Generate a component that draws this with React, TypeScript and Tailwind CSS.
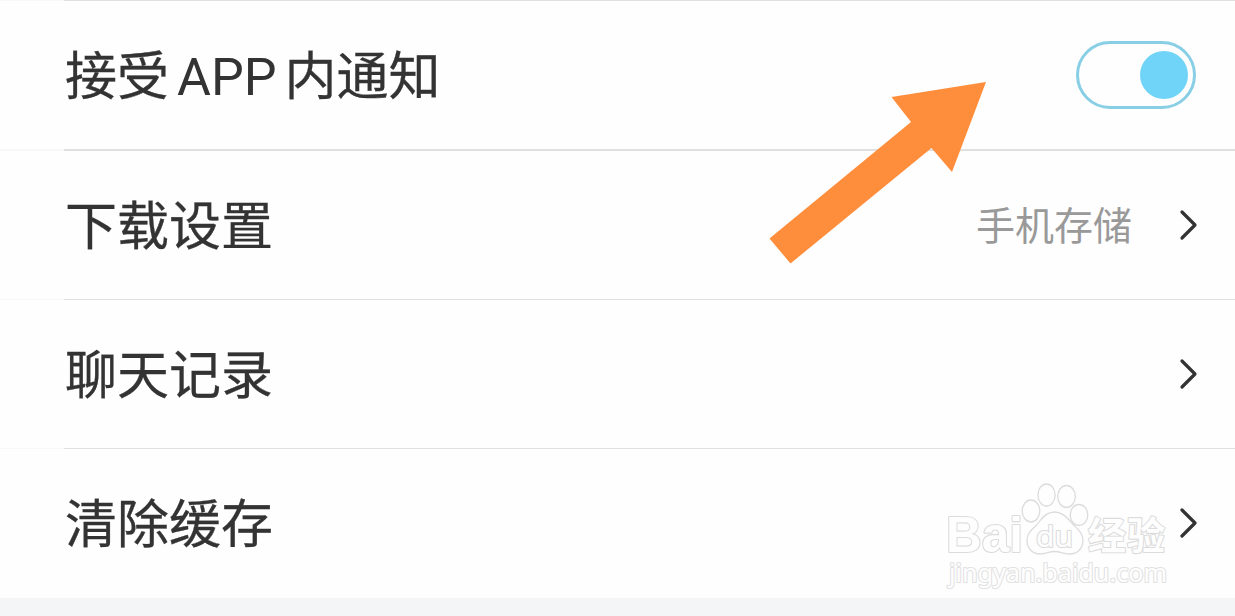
const rows = [
  { label: "下载设置", value: "手机存储", divider: true },
  { label: "聊天记录", value: "", divider: true },
  { label: "清除缓存", value: "", divider: false },
];

function Divider({ className }: { className: string }) {
  return (
    <div className={`flex shrink-0 ${className}`}>
      <div className="w-16 bg-[#f8f8f8]" />
      <div className="flex-1 bg-[#e0e0e0]" />
    </div>
  );
}

function Chevron() {
  return (
    <svg width="20" height="34" viewBox="0 0 20 34" fill="none" stroke="#333" strokeWidth="3.2" strokeLinecap="round" strokeLinejoin="round">
      <path d="M3 4 L16 17 L3 30" />
    </svg>
  );
}

function Toggle() {
  return (
    <div className="flex h-[68px] w-[120px] items-center justify-end rounded-full border-3 border-[#88cfe5] pr-[5px]">
      <div className="size-12 rounded-full bg-[#70d3f8]" />
    </div>
  );
}

function Arrow() {
  return (
    <svg className="absolute left-[765px] top-[78px]" width="225" height="190" viewBox="765 78 225 190">
      <polygon points="986,82 891.5,97 911,122 769.5,238.5 790.5,263.5 931.5,148 952,172" fill="#ff8e3c" />
    </svg>
  );
}

function Watermark() {
  return (
    <svg className="absolute left-[940px] top-[478px]" width="235" height="116" viewBox="940 478 235 116" fill="#fefefe" stroke="#dcdcdc" strokeWidth="1.3">
      <ellipse cx="1031" cy="511" rx="8.8" ry="11" />
      <ellipse cx="1046.5" cy="495" rx="8.6" ry="11" />
      <ellipse cx="1066.5" cy="496.5" rx="8.8" ry="11" />
      <ellipse cx="1079" cy="515" rx="8.8" ry="10.5" />
      <path d="M1054.5 512 C1047 512 1042.5 517 1039 522 C1035 528 1027 531 1027 540.5 C1027 548 1032 554 1040 554 C1046 554 1049 551.5 1054.5 551.5 C1060 551.5 1065 554 1070 554 C1078 554 1083 548 1083 540.5 C1083 532 1076 528 1071 522 C1067 517 1062 512 1054.5 512 Z" />
      <g paintOrder="stroke" strokeWidth="2.2" strokeLinejoin="round">
        <text x="946" y="552" fontSize="50" fontWeight="700" fontFamily="'Liberation Sans', sans-serif" textLength="77" lengthAdjust="spacingAndGlyphs">Bai</text>
        <text x="1036" y="547" fontSize="29" fontFamily="'Noto Sans', sans-serif" textLength="37" lengthAdjust="spacingAndGlyphs">du</text>
        <text x="1088" y="549" fontSize="38" fontWeight="700" fontFamily="'Noto Sans CJK SC', sans-serif" textLength="77">经验</text>
        <text x="949" y="582" fontSize="25" fontFamily="'Noto Sans', sans-serif" stroke="#e2e2e2" textLength="218" lengthAdjust="spacingAndGlyphs">jingyan.baidu.com</text>
      </g>
    </svg>
  );
}

export default function App() {
  return (
    <div className="relative flex h-[616px] w-[1235px] flex-col overflow-hidden bg-[#fefefe] font-['Noto_Sans_CJK_SC',sans-serif] text-[52px] leading-none text-[#333]">
      <Divider className="h-px" />
      <div className="flex h-[148px] shrink-0 items-center justify-between pl-[65px] pr-[39px]">
        <p className="[-webkit-text-stroke:0.3px_#333]">
          接受<span className="mx-2 font-['Roboto',sans-serif] [-webkit-text-stroke:0px]">APP</span>内通知
        </p>
        <Toggle />
      </div>
      <Divider className="h-0.5" />
      {rows.map(({ label, value, divider }) => (
        <div key={label} className="flex h-[149px] shrink-0 flex-col">
          <div className="flex h-[148px] items-center pl-[65px] pr-[36px]">
            <p className="flex-1 pb-[5px] [-webkit-text-stroke:0.3px_#333]">{label}</p>
            {value && <p className="mr-[47px] pb-[3px] text-[39px] text-[#999]">{value}</p>}
            <Chevron />
          </div>
          {divider && <Divider className="h-px" />}
        </div>
      ))}
      <div className="flex-1 bg-[#f4f5f7]" />
      <Arrow />
      <Watermark />
    </div>
  );
}
